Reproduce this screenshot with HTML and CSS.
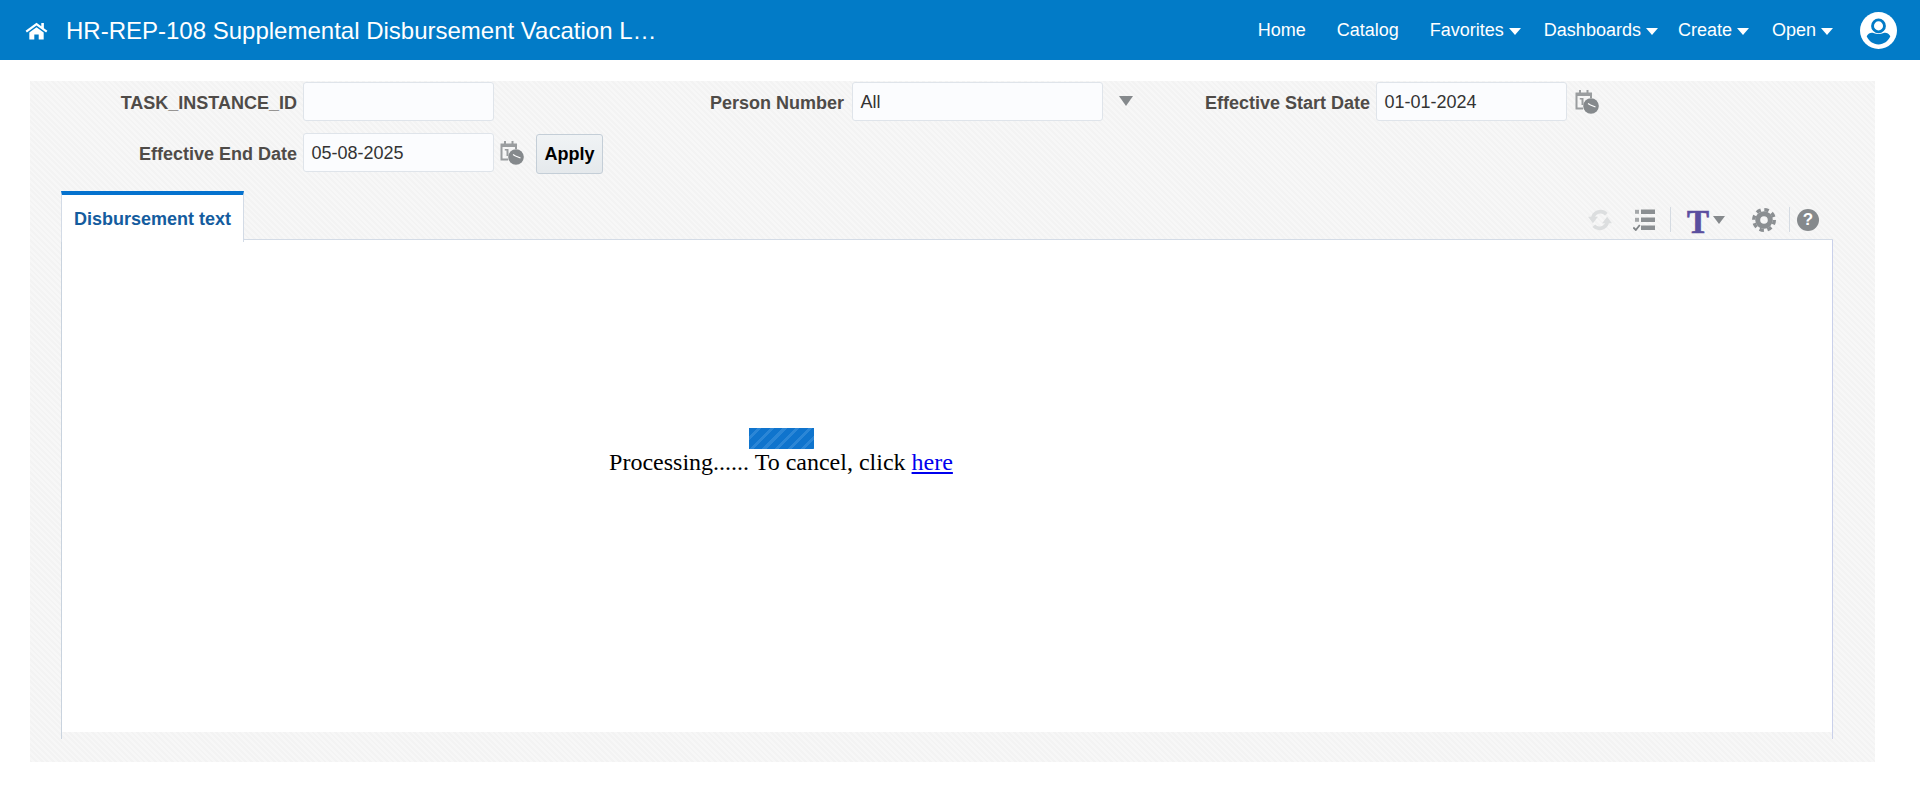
FILE: index.html
```html
<!DOCTYPE html>
<html lang="en">
<head>
<meta charset="utf-8">
<title>HR-REP-108</title>
<link rel="stylesheet" href="styles.css">
</head>
<body>
<header class="topbar">
  <svg class="home-icon" viewBox="0 0 24 19" aria-hidden="true"><path d="M12 1.500 0.600 9.800 2 11.500 12 4.300 22 11.500 23.400 9.800 19.700 7.100V1.800H17V5.100Z" fill="#fff"/><path d="M12 6 4.500 11.500V19h5.200v-5.400h4.600V19h5.200v-7.500Z" fill="#fff"/></svg>
  <h1 class="title">HR-REP-108 Supplemental Disbursement Vacation L…</h1>
  <nav class="nav">
    <a class="nav-item nav-home">Home</a>
    <a class="nav-item nav-catalog">Catalog</a>
    <a class="nav-item nav-fav">Favorites<i class="caret"></i></a>
    <a class="nav-item nav-dash">Dashboards<i class="caret"></i></a>
    <a class="nav-item nav-create">Create<i class="caret"></i></a>
    <a class="nav-item nav-open">Open<i class="caret"></i></a>
    <svg class="avatar" viewBox="0 0 36 36" aria-hidden="true"><circle cx="18" cy="18" r="18" fill="#fff"/><circle cx="18" cy="13.500" r="5.800" fill="none" stroke="#027bc7" stroke-width="2.800"/><path d="M6.500 23.500c1.500-2.800 4.500-3.800 6.500-3 3 1.300 7 1.300 10 0 2-.8 5 .2 6.500 3-2 4.600-6.500 8-11.500 8S8.500 28.100 6.500 23.500Z" fill="#027bc7"/></svg>
  </nav>
</header>
<main class="panel">
  <div class="form-row">
    <label class="label label-task">TASK_INSTANCE_ID</label>
    <div class="input"></div>
    <label class="label label-person">Person Number</label>
    <div class="input input-wide">All</div>
    <i class="select-arrow"></i>
    <label class="label label-start">Effective Start Date</label>
    <div class="input">01-01-2024</div>
    <svg class="cal" viewBox="0 0 25 25" aria-hidden="true"><use href="#cal-icon"/></svg>
  </div>
  <div class="form-row row-two">
    <label class="label label-task">Effective End Date</label>
    <div class="input">05-08-2025</div>
    <svg class="cal cal-tight" viewBox="0 0 25 25" aria-hidden="true"><g id="cal-icon"><path d="M1.500 3.500h3.500V1h2v2.500h5.500V1h2v2.500h3.500V9h-2V7H3.500v11.500H9v2H1.500Z" fill="#9a9d9f"/><path d="M7.500 9h2v7h-2zM5.800 9h2v1.500h-2z" fill="#9a9d9f"/><circle cx="17" cy="17" r="7.800" fill="#85898c"/><path d="M16.500 16l5 2M16.500 16l-2.500-1.500" stroke="#fff" stroke-width="1.300" fill="none"/></g></svg>
    <button class="apply">Apply</button>
  </div>
  <div class="tabbar">
    <div class="tab">Disbursement text</div>
    <div class="toolbar">
      <svg class="tool tool-refresh" viewBox="0 0 23 23" aria-hidden="true"><g fill="none" stroke="#dcdedf" stroke-width="3.600"><path d="M4.500 10a7.500 7.500 0 0 1 13-4"/><path d="M18.500 13a7.500 7.500 0 0 1-13 4"/></g><path d="M0 8.500h9.500l-4.800 6ZM23 14.500h-9.500l4.800-6Z" fill="#dcdedf"/></svg>
      <svg class="tool tool-list" viewBox="0 0 22 22" aria-hidden="true"><g fill="#8b8f92"><rect x="8" y="0.500" width="14" height="4.500"/><rect x="8" y="8.500" width="14" height="4.500"/><rect x="8" y="16.500" width="14" height="4.500"/></g><g fill="#a5a8aa"><rect x="2" y="0.800" width="4" height="4"/><rect x="2" y="8.800" width="4" height="4"/></g><path d="M0.300 18.500l2.500 2.500 4-5" fill="none" stroke="#7f8386" stroke-width="1.800"/></svg>
      <span class="sep sep-one"></span>
      <span class="t-icon">T</span>
      <i class="t-caret"></i>
      <svg class="tool tool-gear" viewBox="0 0 24 24" aria-hidden="true"><circle cx="12" cy="12" r="10.300" fill="none" stroke="#8b8f92" stroke-width="3.400" stroke-dasharray="4.500 3.590"/><circle cx="12" cy="12" r="6.300" fill="none" stroke="#8b8f92" stroke-width="5"/></svg>
      <span class="sep sep-two"></span>
      <span class="help">?</span>
    </div>
  </div>
  <div class="frame">
    <div class="content">
      <div class="progress-wrap">
        <div class="progress"></div>
        <div class="processing">Processing...... To cancel, click <a class="here" href="#">here</a></div>
      </div>
    </div>
  </div>
</main>
</body>
</html>
```
FILE: styles.css
```css
* { box-sizing: border-box; }
html, body { margin: 0; padding: 0; background: #fff; overflow: hidden; }
body { font-family: "Liberation Sans", Arial, sans-serif; height: 800px; }

.topbar { height: 60px; background: #027bc7; color: #fff; display: flex; align-items: center; padding-left: 25px; }
.home-icon { width: 23px; height: 19px; flex: none; margin-top: 1px; }
.title { margin: 1px 0 0 18px; font-size: 24px; font-weight: 400; white-space: nowrap; }
.nav { margin-left: auto; display: flex; align-items: center; font-size: 18px; padding-right: 23px; }
.nav-item { display: flex; align-items: center; white-space: nowrap; }
.nav-catalog { margin-left: 31px; }
.nav-fav { margin-left: 31px; }
.nav-dash { margin-left: 23px; }
.nav-create { margin-left: 20px; }
.nav-open { margin-left: 23px; }
.caret { width: 0; height: 0; margin-left: 5px; margin-top: 3px; border-left: 6px solid transparent; border-right: 6px solid transparent; border-top: 7px solid #fff; }
.avatar { width: 37px; height: 37px; margin-left: 27px; flex: none; }

.panel {
  margin: 21px 45px 0 30px; height: 681px; padding-top: 1px;
  background: repeating-linear-gradient(45deg, #f3f3f3 0 2px, #f7f7f7 2px 4px);
}
.form-row { display: flex; align-items: center; height: 39px; }
.row-two { margin-top: 12px; }
.label { font-size: 18px; font-weight: 700; color: #4f4b48; text-align: right; white-space: nowrap; margin: 3px 6px 0 0; flex: none; }
.label-task { width: 267px; }
.label-person { width: 344px; margin-right: 8px; margin-left: 6px; }
.label-start { width: 237px; }
.input { width: 191px; height: 39px; flex: none; background: #fbfcfe; border: 1px solid #dfe4ea; border-radius: 3px; padding: 0 7.500px; font-size: 18px; line-height: 38px; color: #333; }
.input-wide { width: 251px; }
.select-arrow { width: 0; height: 0; margin-left: 16px; margin-top: -1px; flex: none; border-left: 7.500px solid transparent; border-right: 7.500px solid transparent; border-top: 10px solid #85898c; }
.cal { width: 25px; height: 25px; margin-left: 7px; flex: none; }
.cal-tight { margin-left: 5px; }
.apply { width: 67px; height: 40px; margin: 3px 0 0 12px; padding: 0; flex: none; font: 700 18px "Liberation Sans", Arial, sans-serif; color: #000; background: linear-gradient(#f0f3f5, #e5e9ec); border: 1px solid #c4ced7; border-radius: 3px; }

.tabbar { margin: 19px 42px 0 31px; height: 49px; display: flex; align-items: flex-start; border-bottom: 1px solid #d3dbe6; }
.tab { width: 183px; height: 51px; flex: none; background: #fff; border-top: 4px solid #0572ce; border-left: 1px solid #d3dbe6; border-right: 1px solid #d3dbe6; font-size: 18px; font-weight: 700; color: #145c9e; text-align: center; line-height: 49px; white-space: nowrap; position: relative; }
.toolbar { margin-left: auto; height: 48px; display: flex; align-items: flex-start; position: relative; padding-right: 14px; }
.tool { flex: none; display: block; }
.tool-refresh { width: 24px; height: 24px; margin-top: 17px; }
.tool-list { width: 22px; height: 22px; margin-top: 18px; margin-left: 21px; }
.sep { width: 1px; height: 25px; margin-top: 16px; background: #d5dbe2; flex: none; }
.sep-one { margin-left: 15px; }
.t-icon { font: 700 33px/1 "Liberation Serif", "Times New Roman", serif; color: #5b4f9f; -webkit-text-stroke: 0.7px #5b4f9f; margin-left: 16px; margin-top: 15px; flex: none; width: 22px; text-align: center; }
.t-caret { width: 0; height: 0; margin: 25px 0 0 4px; flex: none; border-left: 6.500px solid transparent; border-right: 6.500px solid transparent; border-top: 8px solid #85898c; }
.tool-gear { width: 24px; height: 24px; margin: 17px 0 0 27px; }
.sep-two { margin-left: 13px; }
.help { width: 22px; height: 22px; margin: 18px 0 0 7px; flex: none; border-radius: 50%; background: #85898c; color: #fff; font-size: 17px; font-weight: 700; line-height: 22px; text-align: center; }

.frame { margin: 0 42px 0 31px; height: 499px; padding-bottom: 7px; border-left: 1px solid #c9d3de; border-right: 1px solid #c9d0ea; }
.content { height: 492px; background: #fff; padding: 188px 0 0 547px; }
.progress-wrap { width: 344px; display: flex; flex-direction: column; align-items: center; }
.progress { width: 65px; height: 21px; flex: none; background: repeating-linear-gradient(135deg, #0f74cd 0 6px, #2b86d6 6px 9px); }
.processing { font: 24px/27px "Liberation Serif", "Times New Roman", serif; color: #000; white-space: nowrap; }
.here { color: #00e; text-decoration: underline; }
```
